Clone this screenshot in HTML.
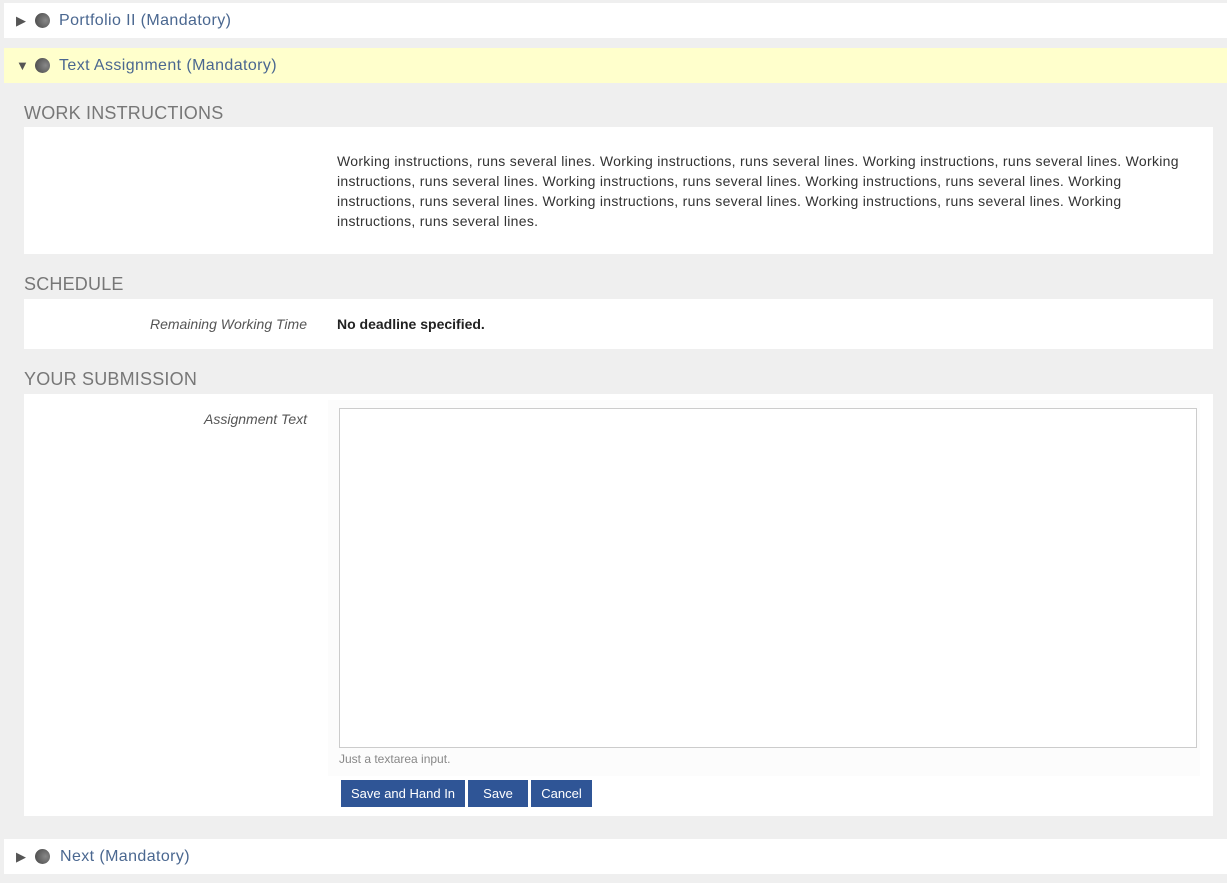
<!DOCTYPE html>
<html><head><style>
body{margin:0;background:#efefef;font-family:"Liberation Sans",sans-serif;width:1227px;height:883px;position:relative;overflow:hidden}
.abs{position:absolute}
.row{position:absolute;left:4px;right:0;height:35px;background:#fff;font-size:16px;color:#4a6790;line-height:35px;letter-spacing:0.4px}
.row .tri{position:absolute;left:12px;top:0;font-size:13px;color:#555}
.row .dot{position:absolute;left:31px;top:10px;width:15px;height:15px;border-radius:50%;background:radial-gradient(circle at 70% 50%,#888,#444)}
.row .t{position:absolute;left:55px}
h3{position:absolute;left:24px;margin:0;font-weight:normal;font-size:18px;color:#777;letter-spacing:0.2px}
.panel{position:absolute;left:24px;width:1189px;background:#fff}
.lbl{position:absolute;right:906px;font-style:italic;font-size:14px;color:#555}
.btn{position:absolute;top:780px;height:27px;background:#2f5596;color:#fff;font-size:13px;line-height:27px;text-align:center}
</style></head><body>
<div class="row" style="top:3px"><span class="tri">▶</span><span class="dot"></span><span class="t">Portfolio II (Mandatory)</span></div>
<div class="row" style="top:48px;background:#ffffcc"><span class="tri">▼</span><span class="dot"></span><span class="t">Text Assignment (Mandatory)</span></div>
<h3 style="top:103px">WORK INSTRUCTIONS</h3>
<div class="panel" style="top:127px;height:127px">
<div class="abs" style="left:313px;top:24px;width:850px;font-size:14px;line-height:20px;color:#333;letter-spacing:0.3px">Working instructions, runs several lines. Working instructions, runs several lines. Working instructions, runs several lines. Working instructions, runs several lines. Working instructions, runs several lines. Working instructions, runs several lines. Working instructions, runs several lines. Working instructions, runs several lines. Working instructions, runs several lines. Working instructions, runs several lines.</div>
</div>
<h3 style="top:274px">SCHEDULE</h3>
<div class="panel" style="top:299px;height:50px">
<div class="lbl" style="top:17px">Remaining Working Time</div>
<div class="abs" style="left:313px;top:17px;font-size:14px;font-weight:bold;color:#222">No deadline specified.</div>
</div>
<h3 style="top:369px">YOUR SUBMISSION</h3>
<div class="panel" style="top:394px;height:422px">
<div class="lbl" style="top:17px">Assignment Text</div>
<div class="abs" style="left:304px;top:6px;width:872px;height:376px;background:#fcfcfc"></div>
<div class="abs" style="left:315px;top:14px;width:856px;height:338px;border:1px solid #ccc;background:#fff"></div>
<div class="abs" style="left:315px;top:358px;font-size:12px;color:#888">Just a textarea input.</div>
</div>
<div class="btn" style="left:341px;width:124px">Save and Hand In</div>
<div class="btn" style="left:468px;width:60px">Save</div>
<div class="btn" style="left:531px;width:61px">Cancel</div>
<div class="row" style="top:839px"><span class="tri">▶</span><span class="dot"></span><span class="t" style="left:56px">Next (Mandatory)</span></div>
</body></html>
